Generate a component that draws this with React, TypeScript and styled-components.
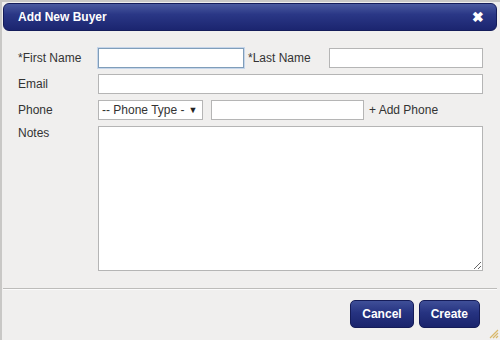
import * as React from 'react';
import styled, { createGlobalStyle } from 'styled-components';

const GlobalStyle = createGlobalStyle`
  html, body {
    margin: 0;
    padding: 0;
    background: #efeeed;
  }
`;

const Dialog = styled.div`
  width: 500px;
  height: 340px;
  box-sizing: border-box;
  display: flex;
  flex-direction: column;
  background: #f0efee;
  border-top: 2px solid #c9c8c6;
  border-left: 2px solid #c9c8c6;
  padding: 1px 3px 0 1px;
  font-family: 'Liberation Sans', Arial, sans-serif;
  color: #333;
  position: relative;
`;

const TitleBar = styled.div`
  height: 28px;
  box-sizing: border-box;
  display: flex;
  align-items: center;
  justify-content: space-between;
  padding: 0 12px 0 14px;
  border-radius: 6px;
  border: 1px solid #141c5a;
  background: linear-gradient(to bottom, #4a5aa0 0%, #2a3786 40%, #1b256f 100%);
`;

const Title = styled.span`
  color: #fff;
  font-weight: bold;
  font-size: 12px;
`;

const Close = styled.span`
  color: #fff;
  font-weight: bold;
  font-size: 14px;
  line-height: 1;
  cursor: pointer;
`;

const Form = styled.div`
  display: flex;
  flex-direction: column;
  gap: 6px;
  padding: 17px 14px 0 15px;
`;

const Row = styled.div<{ $tall?: boolean }>`
  display: flex;
  align-items: ${p => (p.$tall ? 'flex-start' : 'center')};
  height: ${p => (p.$tall ? '145px' : '20px')};
`;

const Label = styled.label<{ $w?: number; $indent?: number }>`
  width: ${p => p.$w ?? 80}px;
  padding-left: ${p => p.$indent ?? 0}px;
  box-sizing: border-box;
  flex-shrink: 0;
  font-size: 12px;
  color: #333;
  white-space: nowrap;
`;

const Input = styled.input<{ $w?: number; $focus?: boolean }>`
  box-sizing: border-box;
  height: 20px;
  width: ${p => (p.$w ? `${p.$w}px` : 'auto')};
  flex: ${p => (p.$w ? '0 0 auto' : '1')};
  border: 1px solid ${p => (p.$focus ? '#7f9db9' : '#b5b5b5')};
  box-shadow: ${p => (p.$focus ? '0 0 0 1px #c5d5ea' : 'none')};
  background: #fff;
  padding: 0 3px;
  outline: none;
  font-family: inherit;
  font-size: 12px;
`;

const Select = styled.div`
  box-sizing: border-box;
  height: 20px;
  width: 105px;
  border: 1px solid #b5b5b5;
  background: #fff;
  display: flex;
  align-items: center;
  padding: 0 3px;
  font-size: 12px;
  color: #333;
  gap: 4px;
  margin-right: 8px;
  white-space: nowrap;
  overflow: hidden;
`;

const Arrow = styled.span`
  font-size: 9px;
  color: #222;
`;

const AddPhone = styled.span`
  font-size: 12px;
  color: #333;
  margin-left: 5px;
`;

const TextArea = styled.textarea`
  box-sizing: border-box;
  flex: 1;
  height: 145px;
  border: 1px solid #b5b5b5;
  background: #fff;
  resize: both;
  outline: none;
  font-family: inherit;
`;

const Separator = styled.div`
  margin-top: 17px;
  height: 0;
  border-top: 1px solid #bdbcba;
  border-bottom: 1px solid #fbfbfb;
`;

const Footer = styled.div`
  display: flex;
  justify-content: flex-end;
  gap: 5px;
  padding: 10px 17px 0 0;
`;

const Button = styled.button`
  height: 28px;
  box-sizing: border-box;
  padding: 0 11px;
  border-radius: 5px;
  border: 1px solid #151c58;
  background: linear-gradient(to bottom, #3f4f98 0%, #263381 45%, #1a246c 100%);
  color: #fff;
  font-weight: bold;
  font-size: 12px;
  font-family: inherit;
  cursor: pointer;
`;

const Grip = styled.svg`
  position: absolute;
  right: 1px;
  bottom: 1px;
`;

export default function App() {
  return (
    <>
      <GlobalStyle />
      <Dialog>
        <TitleBar>
          <Title>Add New Buyer</Title>
          <Close>✖</Close>
        </TitleBar>
        <Form>
          <Row>
            <Label>*First Name</Label>
            <Input $w={146} $focus />
            <Label $w={85} $indent={4}>*Last Name</Label>
            <Input $w={154} />
          </Row>
          <Row>
            <Label>Email</Label>
            <Input />
          </Row>
          <Row>
            <Label>Phone</Label>
            <Select>
              -- Phone Type - <Arrow>▼</Arrow>
            </Select>
            <Input $w={153} />
            <AddPhone>+ Add Phone</AddPhone>
          </Row>
          <Row $tall>
            <Label>Notes</Label>
            <TextArea />
          </Row>
        </Form>
        <Separator />
        <Footer>
          <Button>Cancel</Button>
          <Button>Create</Button>
        </Footer>
        <Grip width="12" height="12" viewBox="0 0 12 12">
          <path d="M11 3 L3 11 M11 6 L6 11 M11 9 L9 11" stroke="#d9b86a" strokeWidth="1.2" />
        </Grip>
      </Dialog>
    </>
  );
}
